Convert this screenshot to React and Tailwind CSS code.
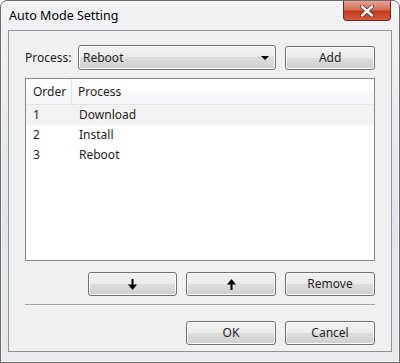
import React from "react";

const font = { fontFamily: '"Noto Sans", "Open Sans", sans-serif' };

function Btn({ children, className = "" }) {
  return (
    <button
      className={
        "h-[24px] rounded-[3px] border border-[#707070] bg-[linear-gradient(#f2f2f2_0%,#ebebeb_50%,#dddddd_50%,#cfcfcf_100%)] shadow-[inset_0_0_0_1px_#fcfcfc] text-[12px] text-[#1e1e1e] flex items-center justify-center " +
        className
      }
    >
      {children}
    </button>
  );
}

function Arrow({ up }) {
  return (
    <svg width="9" height="11" viewBox="0 0 9 11" className={up ? "rotate-180" : ""}>
      <rect x="3.5" y="0" width="2" height="7" fill="#000" />
      <polygon points="0,5.5 9,5.5 4.5,11" fill="#000" />
    </svg>
  );
}

const rows = [
  ["1", "Download"],
  ["2", "Install"],
  ["3", "Reboot"],
];

export default function App() {
  return (
    <div
      style={font}
      className="w-[400px] h-[363px] flex flex-col rounded-t-[7px] border border-[#6b6b6b] bg-[linear-gradient(180deg,#f2f3f4_0%,#e2e6ea_60%,#e8eaec_100%)] shadow-[inset_0_0_0_1px_#ffffffb0]"
    >
      <div className="h-[29px] flex items-start justify-between">
        <div className="pl-[8px] pt-[6px] text-[12.5px] text-black">Auto Mode Setting</div>
        <div className="mr-[8px] mt-0 w-[48px] h-[20px] rounded-b-[4px] border border-t-0 border-[#6e2a20] bg-[linear-gradient(#e8a493_0%,#d4705a_45%,#c2391f_55%,#d65a3c_100%)] flex items-center justify-center">
          <svg width="14" height="12" viewBox="0 0 14 12">
            <path d="M2 1.5 L12 10.5 M12 1.5 L2 10.5" stroke="#5a2a22" strokeWidth="4" strokeLinecap="round" />
            <path d="M2 1.5 L12 10.5 M12 1.5 L2 10.5" stroke="#ffffff" strokeWidth="2.4" strokeLinecap="round" />
          </svg>
        </div>
      </div>
      <div className="mx-[7px] mb-[10px] flex-1 border border-[#8e9297] bg-[#f0f0f0] px-[16px] pt-[14px] flex flex-col">
        <div className="flex items-center gap-[9px]">
          <div className="w-[44px] text-[12px] text-[#1e1e1e]">Process:</div>
          <div className="w-[199px] h-[25px] rounded-[3px] border border-[#707070] bg-[linear-gradient(#f2f2f2_0%,#ebebeb_50%,#dddddd_50%,#cfcfcf_100%)] shadow-[inset_0_0_0_1px_#fcfcfc] flex items-center justify-between pl-[4px] pr-[6px]">
            <span className="text-[12px] text-[#1e1e1e]">Reboot</span>
            <svg width="8" height="4" viewBox="0 0 8 4">
              <polygon points="0,0 8,0 4,4" fill="#000" />
            </svg>
          </div>
          <Btn className="w-[90px] ml-0">Add</Btn>
        </div>
        <div className="mt-[8px] h-[183px] border border-[#828790] bg-white flex flex-col">
          <div className="h-[26px] flex items-center text-[12px] text-[#1e1e1e] bg-[linear-gradient(#ffffff_0%,#ffffff_50%,#f7f8fa_50%,#f3f4f6_100%)] border-b border-[#e5e5e5]">
            <div className="w-[46px] pl-[7px] h-full flex items-center border-r border-[#e5e5e5]">Order</div>
            <div className="pl-[6px]">Process</div>
          </div>
          {rows.map(([n, p], i) => (
            <div
              key={n}
              className={
                "h-[20px] flex items-center text-[12px] text-[#1e1e1e] " +
                (i === 0 ? "bg-[#f3f3f3]" : "")
              }
            >
              <div className="w-[46px] pl-[7px]">{n}</div>
              <div className="pl-[7px]">{p}</div>
            </div>
          ))}
        </div>
        <div className="mt-[11px] flex justify-end gap-[9px]">
          <Btn className="w-[89px]">
            <Arrow />
          </Btn>
          <Btn className="w-[90px]">
            <Arrow up />
          </Btn>
          <Btn className="w-[90px]">Remove</Btn>
        </div>
        <div className="mt-[8px] border-t border-[#a0a0a0] border-b-white border-b h-0" />
        <div className="mt-[15px] flex justify-end gap-[9px]">
          <Btn className="w-[90px]">OK</Btn>
          <Btn className="w-[90px]">Cancel</Btn>
        </div>
      </div>
    </div>
  );
}
